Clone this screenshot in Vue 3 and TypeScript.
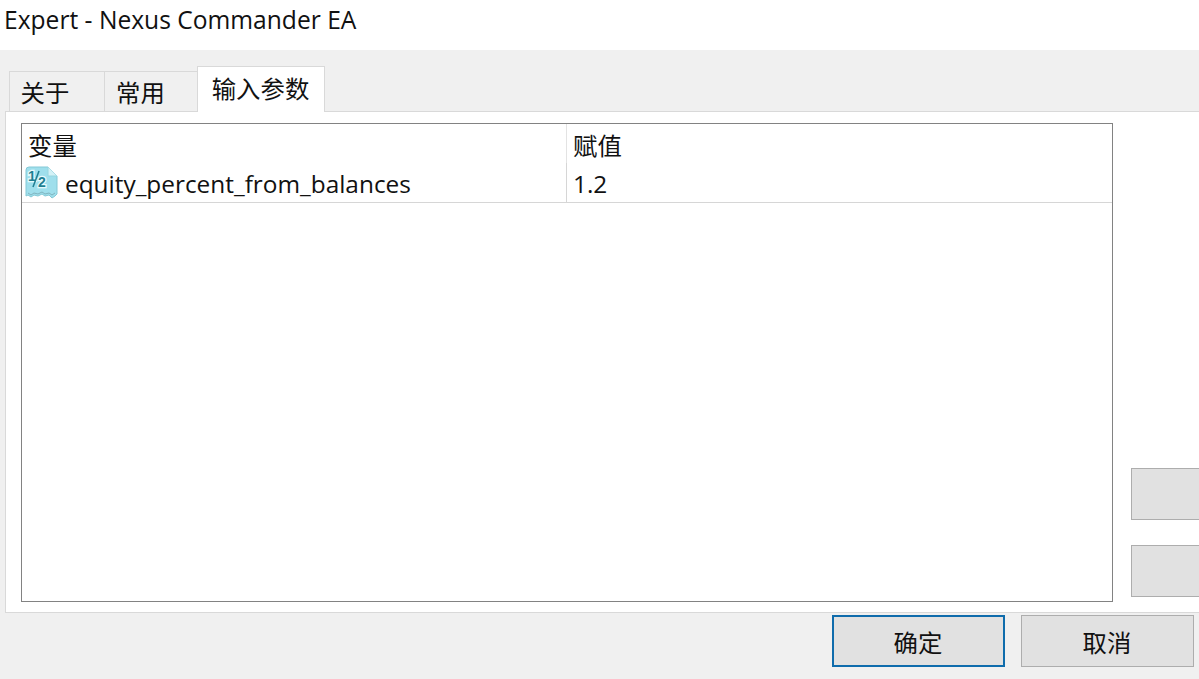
<template>
  <div class="dialog">
    <header class="title-bar">Expert - Nexus Commander EA</header>

    <div class="dialog-body">
      <!-- tabs -->
      <div class="tab-strip">
        <div
          v-for="tab in tabs"
          :key="tab.label"
          class="tab"
          :class="[tab.cls, { active: tab.label === activeTab }]"
        >{{ tab.label }}</div>
      </div>

      <!-- panel -->
      <div class="panel">
        <div class="param-list">
          <div class="list-row list-head">
            <div class="cell cell-name head-name">变量</div>
            <div class="cell cell-value head-value">赋值</div>
          </div>
          <div v-for="p in params" :key="p.name" class="list-row list-item">
            <div class="cell cell-name">
              <svg class="param-icon" width="34" height="33" viewBox="0 0 34 33">
                <path d="M2 4 Q2 1 5 1 H24 L33 10 V28 L31 30 L28 32 L25 29 L21 30 L18 28 L14 30 L10 29 L7 31 L4 29 L2 30 Z" fill="#9fdfec" stroke="#84c9d6" stroke-width="1" />
                <path d="M24 1 V10 H33" fill="#d3f1f6" stroke="#96d6e0" stroke-width="1" />
                <path d="M4 27 L7 29 L10 27 L14 28 L18 26 L21 28 L25 27 L28 29 L31 27" fill="none" stroke="#7fb4bf" stroke-width="1" />
                <text x="4" y="15" class="icon-text halo">1</text>
                <text x="14" y="21" class="icon-text halo">2</text>
                <text x="4" y="15" class="icon-text">1</text>
                <text x="14" y="21" class="icon-text">2</text>
                <path d="M9 21 L15 5" stroke="#1f7f92" stroke-width="1.6" fill="none" />
              </svg>
              <span class="param-name">{{ p.name }}</span>
            </div>
            <div class="cell cell-value item-value">{{ p.value }}</div>
          </div>
        </div>

        <div class="side-col">
          <button class="side-btn"></button>
          <button class="side-btn"></button>
        </div>
      </div>

      <!-- footer buttons -->
      <div class="footer">
        <button class="btn btn-default">确定</button>
        <button class="btn">取消</button>
      </div>
    </div>
  </div>
</template>

<script setup lang="ts">
const activeTab = '输入参数'

const tabs = [
  { label: '关于', cls: 'tab-about' },
  { label: '常用', cls: 'tab-common' },
  { label: '输入参数', cls: 'tab-inputs' },
]

const params = [{ name: 'equity_percent_from_balances', value: '1.2' }]
</script>

<style>
html, body {
  margin: 0;
  background: #f0f0f0;
}
</style>

<style scoped>
.dialog {
  width: 1199px;
  height: 679px;
  display: flex;
  flex-direction: column;
  overflow: hidden;
  font-family: "Open Sans", "Noto Sans CJK SC", sans-serif;
  color: #111;
  background: #f0f0f0;
}

.title-bar {
  height: 50px;
  flex: none;
  box-sizing: border-box;
  padding: 2px 0 0 4px;
  background: #fff;
  font-size: 24.6px;
  line-height: 36px;
}

.dialog-body {
  flex: 1;
  display: flex;
  flex-direction: column;
  padding-left: 5px;
}

/* tabs */
.tab-strip {
  height: 62px;
  flex: none;
  box-sizing: border-box;
  padding: 16px 0 0 4px;
  display: flex;
  align-items: flex-end;
  position: relative;
  z-index: 1;
  margin-bottom: -1px;
}

.tab {
  height: 40px;
  box-sizing: border-box;
  margin-bottom: 1px;
  border: 1px solid #d9d9d9;
  border-width: 1px 0 0 1px;
  background: #f0f0f0;
  font-size: 24.4px;
  line-height: 42px;
  text-align: center;
}
.tab-about { width: 95px; padding-right: 24px; }
.tab-common { width: 93px; padding-right: 21px; }
.tab-inputs { width: 128px; padding-right: 1px; }

.tab.active {
  height: 46px;
  margin-bottom: 0;
  background: #fff;
  border-width: 1px 1px 0 1px;
  line-height: 44px;
}

/* panel */
.panel {
  height: 502px;
  flex: none;
  box-sizing: border-box;
  padding: 11px 0 10px 15px;
  display: flex;
  background: #fff;
  border-top: 1px solid #d9d9d9;
  border-left: 1px solid #d9d9d9;
  border-bottom: 1px solid #d9d9d9;
}

.param-list {
  width: 1092px;
  flex: none;
  box-sizing: border-box;
  border: 1px solid #828282;
  background: #fff;
}

.list-row {
  display: flex;
}
.list-head {
  height: 39px;
}
.list-item {
  height: 39px;
  border-bottom: 1px solid #d6d6d6;
}

.cell {
  display: flex;
  align-items: center;
  box-sizing: border-box;
  font-size: 24.4px;
}
.cell-name {
  width: 545px;
  flex: none;
  border-right: 1px solid #e3e3e3;
}
.cell-value {
  flex: 1;
}
.head-name { padding: 2px 0 0 6px; }
.head-value { padding: 2px 0 0 6px; }
.list-item .cell-name {
  padding-left: 2px;
  border-right-color: #d6d6d6;
}
.item-value { padding: 2px 0 0 6px; }

.param-icon {
  flex: none;
  margin-right: 7px;
}
.icon-text {
  font-family: "Liberation Sans", sans-serif;
  font-size: 14px;
  font-weight: 700;
  fill: #1f7f92;
}
.halo {
  stroke: #e6fafc;
  stroke-width: 2.5px;
  fill: #e6fafc;
}

.param-name {
  font-size: 24.4px;
  position: relative;
  top: 1px;
}

.side-col {
  flex: 1;
  display: flex;
  flex-direction: column;
  align-items: flex-end;
  gap: 25px;
  justify-content: flex-end;
  padding-bottom: 5px;
}

.side-btn {
  width: 68px;
  height: 52px;
  box-sizing: border-box;
  padding: 0;
  background: #e1e1e1;
  border: 1px solid #adadad;
  border-right: none;
}

/* footer */
.footer {
  flex: 1;
  display: flex;
  justify-content: flex-end;
  align-items: flex-start;
  gap: 16px;
  padding: 2px 5px 0 0;
}

.btn {
  width: 173px;
  height: 52px;
  box-sizing: border-box;
  padding: 0 1px 0 0;
  background: #e1e1e1;
  border: 1px solid #adadad;
  font-family: "Noto Sans CJK SC", sans-serif;
  font-size: 24.4px;
  color: #111;
}
.btn-default {
  border: 2px solid #0f6cac;
}
</style>
